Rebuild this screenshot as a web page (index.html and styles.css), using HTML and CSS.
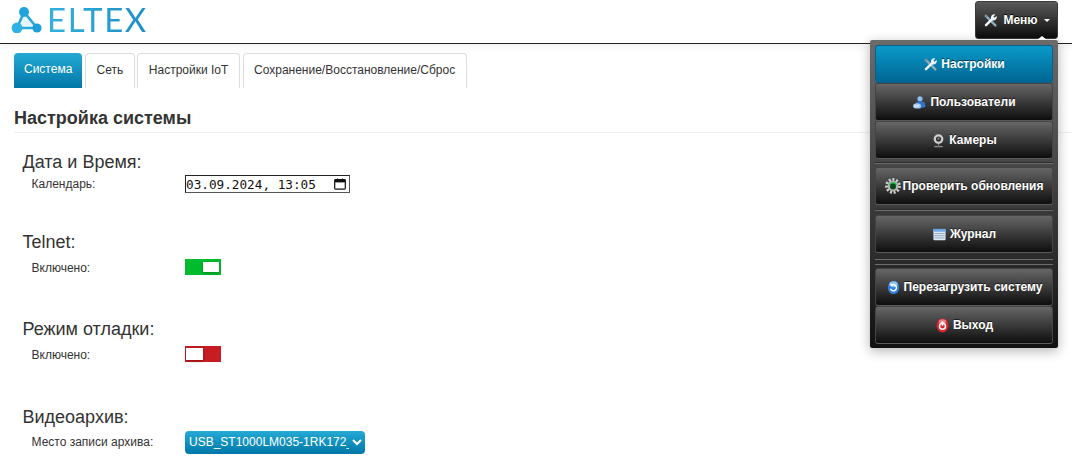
FILE: index.html
```html
<!DOCTYPE html>
<html lang="ru">
<head>
<meta charset="utf-8">
<title>ELTEX</title>
<link rel="stylesheet" href="styles.css">
</head>
<body>
<header class="topbar">
  <div class="logo">
    <svg class="logo-mark" width="38" height="28" viewBox="0 0 38 28">
      <path d="M14 7 L7 23 L27 23 Z" fill="#e6f5fb" stroke="#29a8dc" stroke-width="2.6"/>
      <circle cx="14" cy="7" r="5" fill="#1fa3da"/>
      <circle cx="7" cy="23" r="5.4" fill="#2fb1e4"/>
      <circle cx="27" cy="23" r="4.6" fill="#1f9fd8"/>
    </svg>
    <span class="logo-text">ELTEX</span>
  </div>
  <button class="menu-btn">
    <svg class="icon" viewBox="0 0 16 16"><use href="#tools"/></svg>
    <span>Меню</span>
    <i class="caret"></i>
  </button>
</header>

<svg class="defs" width="0" height="0">
  <defs>
    <g id="tools">
      <path d="M3 3 L13.2 13.2" stroke="#8fa9bd" stroke-width="2.6" stroke-linecap="round"/>
      <path d="M2.2 1.6 L5 3.2 L3.2 5 Z" fill="#6d8699"/>
      <path d="M3.2 13 L10 6.2" stroke="#f2f5f7" stroke-width="2.6" stroke-linecap="round"/>
      <path d="M8.6 6.2 A3.6 3.6 0 0 1 13.2 1.6 L11.2 3.8 L12.2 5 L14.6 3.2 A3.6 3.6 0 0 1 9.8 7.6 Z" fill="#f2f5f7"/>
    </g>
  </defs>
</svg>

<main class="content">
  <nav class="tabs">
    <a class="tab active">Система</a>
    <a class="tab">Сеть</a>
    <a class="tab">Настройки IoT</a>
    <a class="tab">Сохранение/Восстановление/Сброс</a>
  </nav>
  <h1 class="page-title">Настройка системы</h1>

  <section class="group group-date">
    <h2 class="group-title">Дата и Время:</h2>
    <div class="row">
      <label class="row-label">Календарь:</label>
      <div class="date-field">
        <span>03.09.2024, 13:05</span>
        <svg width="12" height="12" viewBox="0 0 12 12"><path d="M1.5 1.5h9a.8.8 0 0 1 .8.8v8a.8.8 0 0 1-.8.8h-9a.8.8 0 0 1-.8-.8v-8a.8.8 0 0 1 .8-.8z" fill="none" stroke="#111" stroke-width="1.2"/><rect x="1" y="2" width="10" height="2.4" fill="#111"/><path d="M3.5 .5v2M8.5 .5v2" stroke="#111"/></svg>
      </div>
    </div>
  </section>

  <section class="group">
    <h2 class="group-title">Telnet:</h2>
    <div class="row">
      <label class="row-label">Включено:</label>
      <div class="switch on"><i></i></div>
    </div>
  </section>

  <section class="group">
    <h2 class="group-title">Режим отладки:</h2>
    <div class="row">
      <label class="row-label">Включено:</label>
      <div class="switch off"><i></i></div>
    </div>
  </section>

  <section class="group">
    <h2 class="group-title">Видеоархив:</h2>
    <div class="row">
      <label class="row-label">Место записи архива:</label>
      <select class="archive"><option>USB_ST1000LM035-1RK172_WDE7BT9G</option></select>
    </div>
  </section>
</main>

<div class="dropdown">
  <i class="drop-arrow"></i>
  <a class="item primary">
    <svg class="icon" viewBox="0 0 16 16"><use href="#tools"/></svg>Настройки
  </a>
  <a class="item">
    <svg class="icon" viewBox="0 0 16 16"><circle cx="8.5" cy="4" r="2.8" fill="#8dbcf0"/><path d="M4 9.5 Q4 7 7 7 L10.5 7 Q14 7 14 10 L14.6 12.5 L8 14.6 Z" fill="#2f74c8"/><ellipse cx="5.4" cy="11.6" rx="4.2" ry="2.8" fill="#a9ccf2"/><path d="M2 11.6h6" stroke="#e4f0fb"/></svg>Пользователи
  </a>
  <a class="item">
    <svg class="icon" viewBox="0 0 16 16"><circle cx="8" cy="6.5" r="5.2" fill="#cfcfcf"/><circle cx="8" cy="6.5" r="2.8" fill="#333"/><circle cx="8" cy="6" r="1.1" fill="#8a8a8a"/><path d="M3.5 14.5h9" stroke="#8a8a8a" stroke-width="1.4"/><path d="M8 11.5v3" stroke="#777" stroke-width="1.4"/></svg>Камеры
  </a>
  <hr class="sep first">
  <a class="item">
    <svg class="icon big" viewBox="0 0 16 16"><circle cx="8" cy="8" r="6.4" fill="none" stroke="#cfcfcf" stroke-width="3" stroke-dasharray="2 1.6"/><circle cx="8" cy="8" r="5.4" fill="#b5b5b5"/><path d="M3.8 7a4.4 4.4 0 0 1 8.4 0z" fill="#2fc04d"/><circle cx="8" cy="8.6" r="3" fill="#0b4a19"/></svg>Проверить обновления
  </a>
  <hr class="sep second">
  <a class="item">
    <svg class="icon" viewBox="0 0 16 16"><rect x="1.5" y="2" width="13" height="12" rx="1" fill="#dfe9f5"/><rect x="1.5" y="2" width="13" height="3" fill="#6ea6e6"/><path d="M2.5 7h11M2.5 9.3h11M2.5 11.6h11" stroke="#8ea6c2"/></svg>Журнал
  </a>
  <hr class="sep third">
  <hr class="sep fourth">
  <a class="item">
    <svg class="icon" viewBox="0 0 16 16"><ellipse cx="8" cy="8" rx="6" ry="7" fill="#2f7fdc"/><ellipse cx="8" cy="4.6" rx="4.4" ry="3.2" fill="#8cc2f4"/><path d="M4.8 9.4a3.3 3.3 0 1 0 1.4-4" fill="none" stroke="#fff" stroke-width="1.6"/><path d="M4.2 4l3.6.3-1.8 2.6z" fill="#fff"/></svg>Перезагрузить систему
  </a>
  <a class="item">
    <svg class="icon" viewBox="0 0 16 16"><ellipse cx="8" cy="8" rx="6.4" ry="7.5" fill="#d8232a"/><ellipse cx="8" cy="3.6" rx="4" ry="2.4" fill="#f07a7e"/><circle cx="8" cy="8.8" r="3.2" fill="none" stroke="#fff" stroke-width="1.6"/><path d="M8 3.6v4.6" stroke="#fff" stroke-width="2"/></svg>Выход
  </a>
</div>
</body>
</html>
```
FILE: styles.css
```css
* { box-sizing: border-box; }
html, body { margin: 0; padding: 0; }
body {
  height: 464px;
  overflow: hidden;
  background: #fff;
  color: #333;
  font-family: "Liberation Sans", Arial, sans-serif;
  font-size: 12px;
  position: relative;
}
.defs { position: absolute; }

.topbar {
  height: 44px;
  display: flex;
  align-items: flex-start;
  justify-content: space-between;
  padding: 1px 14px 0 10px;
  border-bottom: 1px solid #222;
  box-shadow: 0 2px 8px rgba(0,0,0,.07);
}
.logo { display: flex; align-items: flex-start; }
.logo-mark { margin-top: 4px; margin-right: -1px; }
.logo-text {
  font-family: Lato, sans-serif;
  font-size: 33px;
  line-height: 36px;
  letter-spacing: 1.6px;
  background: linear-gradient(90deg, #33b1de, #1c8ec6);
  -webkit-background-clip: text;
  background-clip: text;
  color: transparent;
}
.menu-btn {
  width: 83px;
  height: 38px;
  display: flex;
  align-items: center;
  justify-content: center;
  gap: 2px;
  padding: 0;
  border: 1px solid #3a3a3a;
  border-radius: 3px;
  background: linear-gradient(#595959, #0d0d0d);
  color: #fff;
  font: bold 12px "Liberation Sans", sans-serif;
  text-shadow: 0 -1px 0 #000;
}
.caret {
  margin-left: 4px;
  border: 3px solid transparent;
  border-top: 3px solid #fff;
  border-bottom: 0;
}
.icon { width: 15px; height: 15px; flex: none; margin-right: 3px; }
.icon.big { width: 16px; height: 16px; margin-right: 2px; }

.content { padding: 9px 14px 0; height: 420px; }
.tabs { display: flex; gap: 2.67px; height: 35px; }
.tab {
  display: flex;
  align-items: center;
  padding: 0 10.5px 2px;
  border: 1px solid #ddd;
  border-bottom: 0;
  border-radius: 4px 4px 0 0;
  font-size: 12px;
}
.tab.active {
  padding: 0 10px 4px;
  border: 0;
  color: #fff;
  background: linear-gradient(#25aad4, #0077a8);
}
.page-title {
  margin: 20px 0 0;
  padding-bottom: 4px;
  height: 25px;
  font-size: 18px;
  line-height: 20px;
  font-weight: bold;
  border-bottom: 1px solid #eee;
  width: 1058px;
}
.group { padding-left: 8.5px; margin-bottom: 43.3px; }
.group:last-child { margin-bottom: 0; }
.group-date { margin-top: 19px; margin-bottom: 39px; }
.group-title {
  margin: 0;
  font-size: 18px;
  line-height: 20px;
  font-weight: normal;
}
.group-date .row { margin-top: 3px; height: 18px; }
.row {
  display: flex;
  align-items: center;
  height: 17px;
  margin-top: 7px;
  padding-left: 9px;
}
.row-label { width: 153.5px; flex: none; }

.date-field {
  width: 165px;
  height: 18px;
  display: flex;
  align-items: center;
  justify-content: space-between;
  padding: 0 3px 0 0;
  border: 1px solid #555;
  border-top-color: #222;
  border-left-color: #222;
  font: 12.7px "DejaVu Sans Mono", monospace;
  color: #111;
}
.switch {
  width: 36px;
  height: 16px;
  margin-top: -1px;
  padding: 3px 2px 3px 3px;
  display: flex;
}
.switch i {
  display: block;
  width: 16px;
  height: 10px;
  background: #fff;
  box-shadow: 0 1px 3px rgba(0,0,0,.3);
}
.switch.on { background: #00bb2d; justify-content: flex-end; }
.switch.off { background: #c61c22; padding: 2px 0 2px 1px; }
.switch.off i { width: 17px; height: 12px; }
.archive {
  width: 180px;
  height: 23px;
  margin: -3px 0;
  padding: 0;
  border: 0;
  border-radius: 4px;
  background: linear-gradient(#25aad4, #0077a8);
  color: #fff;
  font: 12px "Liberation Sans", sans-serif;
}

.dropdown {
  position: absolute;
  left: 870px;
  top: 40px;
  width: 188px;
  height: 308px;
  padding: 5px;
  border-radius: 2px;
  background: linear-gradient(#6b6b6b, #111);
  box-shadow: 0 3px 12px rgba(0,0,0,.3);
  display: flex;
  flex-direction: column;
  align-items: stretch;
}
.drop-arrow {
  position: absolute;
  right: 11px;
  top: -4px;
  border: 5px solid transparent;
  border-top: 0;
  border-bottom: 4px solid #fff;
}
.item {
  height: 38px;
  flex: none;
  display: flex;
  align-items: center;
  justify-content: center;
  border: 1px solid #444;
  border-bottom-color: #5a5a5a;
  border-radius: 3px;
  background: linear-gradient(#666, #0e0e0e);
  color: #fff;
  font-weight: bold;
  font-size: 12px;
  text-shadow: 0 -1px 0 rgba(0,0,0,.6);
}
.item.primary {
  border-color: #0a5f8a;
  background: linear-gradient(#0a9ac8, #006592);
}
.sep {
  flex: none;
  width: 100%;
  height: 2px;
  margin: 0;
  border: 0;
  border-top: 1px solid #2a2a2a;
  border-bottom: 1px solid #6d6d6d;
}
.sep.first { margin: 3px 0; }
.sep.second { margin: 4px 0 4px; }
.sep.third { margin: 5px 0 3px; }
.sep.fourth { margin: 0 0 3px; }
```
